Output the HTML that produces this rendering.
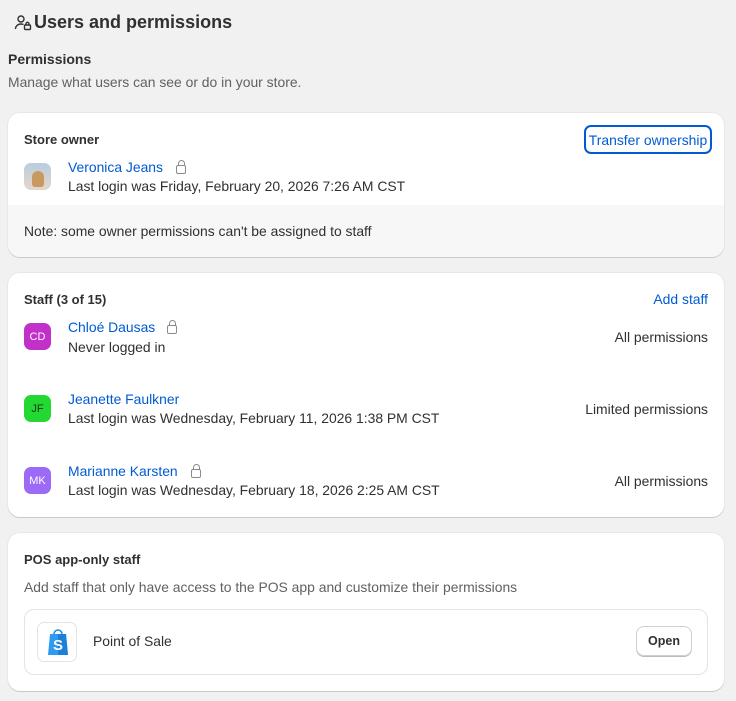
<!DOCTYPE html>
<html><head><style>
*{box-sizing:border-box;margin:0;padding:0}
body{width:736px;height:701px;background:#f1f1f1;font-family:"Liberation Sans",sans-serif;color:#303030;font-size:13.9px;position:relative;overflow:hidden}
.a{position:absolute;white-space:nowrap}
.card{position:absolute;left:8px;width:716px;background:#fff;border-radius:12px;box-shadow:0 1px 0 rgba(0,0,0,.13),0 0 0 1px rgba(0,0,0,.04);overflow:hidden}
.b{font-weight:bold;font-size:13px}
.link{color:#005bd3}
.av{position:absolute;width:27px;height:27px;border-radius:7px;color:#fff;font-size:11px;display:flex;align-items:center;justify-content:center}
.lock{position:absolute;width:10px;height:9px;border:1.3px solid #8a8a8a;border-radius:2px}
.lock:before{content:"";position:absolute;left:1px;top:-6px;width:5px;height:5px;border:1.3px solid #8a8a8a;border-bottom:none;border-radius:4px 4px 0 0}
</style></head><body>
<svg class="a" style="left:14px;top:14px" width="18" height="18" viewBox="0 0 18 18" fill="none" stroke="#303030" stroke-width="1.4"><circle cx="7" cy="5" r="3"/><path d="M1.5 15c0-3 2.5-5 5.5-5 1 0 2 .2 2.5.6"/><rect x="10.5" y="11" width="6" height="4.5" rx="1"/><path d="M12 11V9.8a1.5 1.5 0 013 0V11"/></svg>
<div class="a" style="left:34px;top:12px;font-size:18px;font-weight:bold">Users and permissions</div>
<div class="a" style="left:8px;top:51px;font-size:14px;font-weight:bold">Permissions</div>
<div class="a" style="left:8px;top:74px;color:#616161">Manage what users can see or do in your store.</div>

<div class="card" style="top:113px;height:144px">
 <div class="a b" style="left:16px;top:19px">Store owner</div>
 <div class="a link" style="left:576px;top:12px;width:128px;height:29px;border:2px solid #005bd3;border-radius:7px;display:flex;align-items:center;justify-content:center;font-size:13.9px">Transfer ownership</div>
 <div class="av" style="left:16px;top:50px;background:linear-gradient(#b8cde0,#e8d6c8)"><div style="width:12px;height:16px;border-radius:6px 6px 3px 3px;background:#c89a62;margin-top:4px"></div></div>
 <div class="a link" style="left:60px;top:46px">Veronica Jeans</div>
 <div class="lock" style="left:168px;top:52px"></div>
 <div class="a" style="left:60px;top:65px">Last login was Friday, February 20, 2026 7:26 AM CST</div>
 <div style="position:absolute;left:0;top:92px;width:100%;height:52px;background:#f7f7f7"></div>
 <div class="a" style="left:16px;top:110px">Note: some owner permissions can't be assigned to staff</div>
</div>

<div class="card" style="top:273px;height:244px">
 <div class="a b" style="left:16px;top:19px">Staff (3 of 15)</div>
 <div class="a link" style="right:16px;top:18px">Add staff</div>
 <div class="av" style="left:16px;top:50px;background:#c130c8">CD</div>
 <div class="a link" style="left:60px;top:46px">Chloé Dausas</div>
 <div class="lock" style="left:159px;top:52px"></div>
 <div class="a" style="left:60px;top:66px">Never logged in</div>
 <div class="a" style="right:16px;top:56px">All permissions</div>
 <div class="av" style="left:16px;top:122px;background:#22d831;color:#1a3a1a">JF</div>
 <div class="a link" style="left:60px;top:118px">Jeanette Faulkner</div>
 <div class="a" style="left:60px;top:137px">Last login was Wednesday, February 11, 2026 1:38 PM CST</div>
 <div class="a" style="right:16px;top:128px">Limited permissions</div>
 <div class="av" style="left:16px;top:194px;background:#9c6af6">MK</div>
 <div class="a link" style="left:60px;top:190px">Marianne Karsten</div>
 <div class="lock" style="left:183px;top:196px"></div>
 <div class="a" style="left:60px;top:209px">Last login was Wednesday, February 18, 2026 2:25 AM CST</div>
 <div class="a" style="right:16px;top:200px">All permissions</div>
</div>

<div class="card" style="top:533px;height:158px">
 <div class="a b" style="left:16px;top:19px">POS app-only staff</div>
 <div class="a" style="left:16px;top:46px;color:#616161">Add staff that only have access to the POS app and customize their permissions</div>
 <div style="position:absolute;left:16px;top:76px;width:684px;height:66px;border:1px solid #e3e3e3;border-radius:10px">
  <div style="position:absolute;left:12px;top:12px;width:40px;height:40px;border:1px solid #e3e3e3;border-radius:7px">
   <svg style="position:absolute;left:9px;top:4px" width="22" height="30" viewBox="0 0 22 30"><path d="M7 7a4 4 0 018 0" stroke="#1a8fe0" stroke-width="1.6" fill="none"/><path d="M3 7h16l2 21H1z" fill="#2c9bf0"/><path d="M11 7h8l2 21h-10z" fill="#1b80d8"/><text x="6" y="23" font-family="Liberation Sans" font-weight="bold" font-size="15" fill="#fff">S</text></svg>
  </div>
  <div class="a" style="left:68px;top:23px">Point of Sale</div>
  <div class="a" style="left:611px;top:16px;width:56px;height:30px;border:1px solid #d0d0d0;border-radius:8px;box-shadow:0 1px 0 #bbb;display:flex;align-items:center;justify-content:center;font-weight:bold;font-size:12.5px">Open</div>
 </div>
</div>
</body></html>
